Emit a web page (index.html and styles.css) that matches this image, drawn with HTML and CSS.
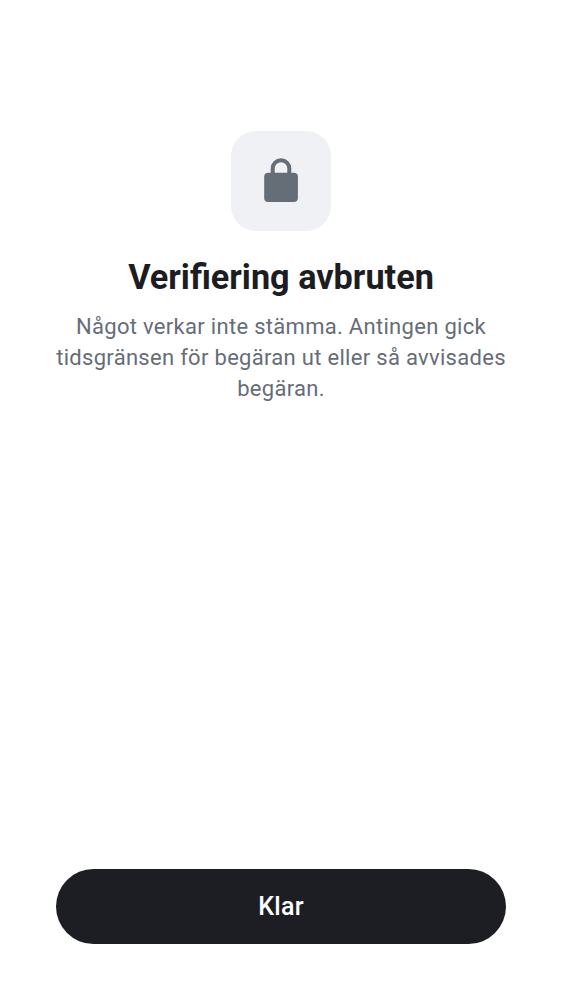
FILE: index.html
```html
<!DOCTYPE html>
<html lang="sv">
<head>
<meta charset="utf-8">
<title>Verifiering avbruten</title>
<link rel="stylesheet" href="styles.css">
</head>
<body>
<main class="screen">
  <div class="icon-tile">
    <svg class="lock" viewBox="0 0 34 44" aria-hidden="true">
      <path d="M8.7 16V10.5a8.3 8.3 0 0 1 16.6 0V16" fill="none" stroke="currentColor" stroke-width="4"/>
      <rect x=".2" y="14.7" width="33.7" height="29.3" rx="4" fill="currentColor"/>
    </svg>
  </div>
  <h1 class="title">Verifiering avbruten</h1>
  <p class="message">Något verkar inte stämma. Antingen gick tidsgränsen för begäran ut eller så avvisades begäran.</p>
  <button class="done">Klar</button>
</main>
</body>
</html>
```

FILE: styles.css
```css
body {
  margin: 0;
  background: #fff;
  font-family: Roboto, sans-serif;
}

.screen {
  box-sizing: border-box;
  height: 1000px;
  padding: 131px 56px 56px;
  display: flex;
  flex-direction: column;
  align-items: center;
}

.icon-tile {
  box-sizing: border-box;
  width: 100px;
  height: 100px;
  padding-bottom: 2px;
  border-radius: 25px;
  background: #f0f1f5;
  color: #656d77;
  display: flex;
  align-items: center;
  justify-content: center;
}

.lock {
  width: 34px;
  height: 44px;
}

.title {
  margin: 24px 0 0;
  font-size: 34.25px;
  line-height: 44px;
  font-weight: 700;
  color: #1b1d22;
  white-space: nowrap;
}

.message {
  margin: 12px -6px 0;
  font-size: 22px;
  line-height: 31px;
  letter-spacing: 0.3px;
  text-align: center;
  color: #656d77;
}

.done {
  width: 100%;
  height: 75px;
  margin-top: auto;
  padding: 0;
  border: 0;
  border-radius: 38px;
  background: #1d1e23;
  color: #fff;
  font: 500 25px/31px Roboto, sans-serif;
  letter-spacing: 0.3px;
}
```
